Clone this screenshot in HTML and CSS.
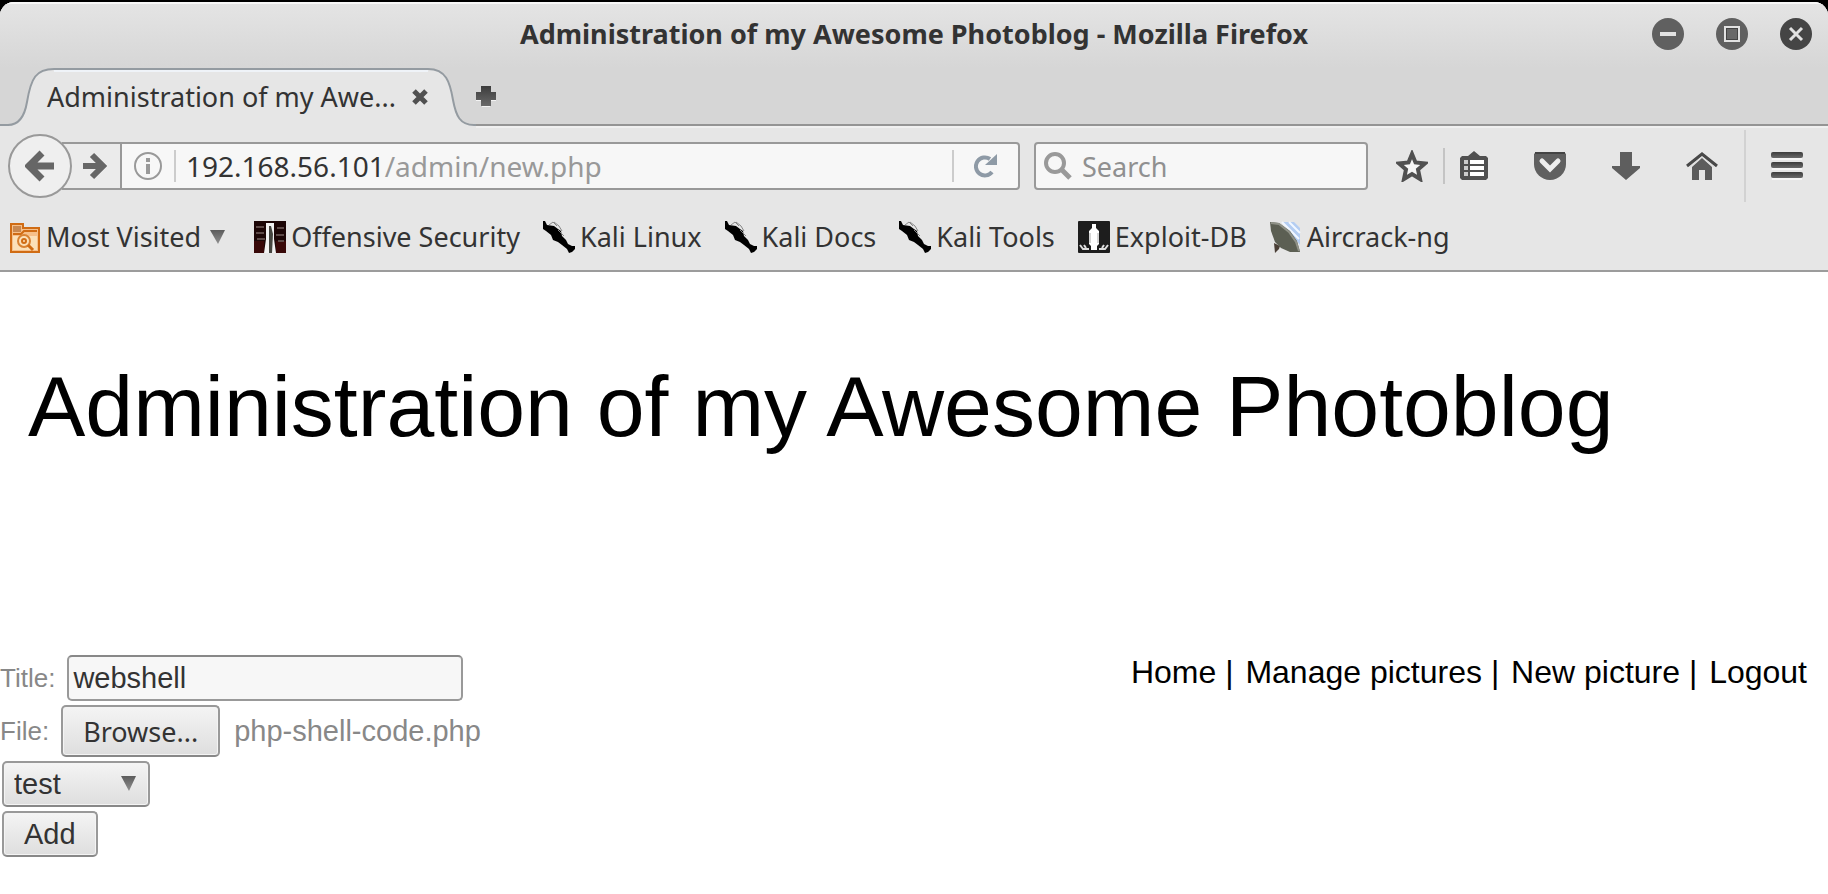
FILE: index.html
```html
<!DOCTYPE html>
<html lang="en">
<head>
<meta charset="utf-8">
<title>Administration of my Awesome Photoblog</title>
<link rel="stylesheet" href="styles.css">
</head>
<body>
<svg class="defs" width="0" height="0" aria-hidden="true">
  <defs>
    <linearGradient id="ink" x1="0" y1="0" x2="0" y2="1">
      <stop offset="0" stop-color="#3c3c3c"/><stop offset="1" stop-color="#6a6a6a"/>
    </linearGradient>
    <linearGradient id="ink-soft" x1="0" y1="0" x2="0" y2="1">
      <stop offset="0" stop-color="#5c5c5c"/><stop offset="1" stop-color="#909090"/>
    </linearGradient>
    <symbol id="dragon" viewBox="0 0 32 32">
      <path d="M0 0l2 0 2 4 7 1 4 3 3 2 1 5 4 4 2 4 4 2 3 0 0 3-3 3-3 1-2-4-5-4-4-3-5-2-2-5-5-4-3-2z" fill="#000"/>
      <path d="M6 4l4-3 4 4M11 1l5 4 3 5M15 9l6 6" fill="none" stroke="#888" stroke-width="1"/>
    </symbol>
  </defs>
</svg>
<div class="window">
  <header class="chrome">
    <div class="titlebar">
      <div class="title">Administration of my Awesome Photoblog - Mozilla Firefox</div>
      <div class="controls">
        <button class="plain" aria-label="Minimize"><svg width="32" height="32"><circle cx="16" cy="16" r="16" fill="#606060"/><path d="M8 16h16" stroke="#e2e2e2" stroke-width="4"/></svg></button>
        <button class="plain" aria-label="Maximize"><svg width="32" height="32"><circle cx="16" cy="16" r="16" fill="#606060"/><rect x="9" y="9" width="14" height="14" fill="#444" stroke="#e2e2e2" stroke-width="2"/><rect x="11" y="11" width="10" height="10" fill="#686868"/></svg></button>
        <button class="plain" aria-label="Close"><svg width="32" height="32"><circle cx="16" cy="16" r="16" fill="#454545"/><path d="M10 10l12 12M22 10L10 22" stroke="#e2e2e2" stroke-width="3"/></svg></button>
      </div>
    </div>
    <div class="tabs">
      <div class="tab">
        <svg class="tab-shape" width="476" height="60" viewBox="0 0 476 60" aria-hidden="true">
          <path d="M0 57H8C20 57 25 46 27 34C31 10 36 1 54 1H428C446 1 450 14 453 32C456 48 460 57 474 57H476V60H0Z" fill="#e6e6e6"/>
          <path d="M0 57H8C20 57 25 46 27 34C31 10 36 1 54 1H428C446 1 450 14 453 32C456 48 460 57 474 57H476" fill="none" stroke="#949ba1" stroke-width="2"/>
          <path d="M54 3H428" stroke="#eff3f8" stroke-width="2"/>
        </svg>
        <span class="tab-label">Administration of my Awe...</span>
        <button class="plain tab-close" aria-label="Close tab"><svg width="16" height="16"><path d="M2 2l12 12M14 2L2 14" stroke="#505050" stroke-width="5"/></svg></button>
      </div>
      <button class="plain" aria-label="New tab"><svg width="22" height="22"><path d="M7 2h8v6h6v7h-6v6H7v-6H1V8h6z" fill="#f4f4f4"/><path d="M6 0h10v6h5v8h-5v6H6v-6H1V6h5z" fill="url(#ink)"/></svg></button>
    </div>
    <nav class="toolbar" aria-label="Navigation">
      <div class="location">
        <button class="back" aria-label="Back"><svg width="30" height="32"><path d="M17 3L4 16l13 13M5 16h24" fill="none" stroke="#666" stroke-width="7"/></svg></button>
        <button class="forward" aria-label="Forward"><svg width="26" height="28"><path d="M10 3l11 11-11 11M1 14h20" fill="none" stroke="#666" stroke-width="6"/></svg></button>
        <div class="urlbar">
          <svg width="28" height="28"><circle cx="14" cy="14" r="13" fill="none" stroke="#999" stroke-width="2"/><path d="M14 6v4M14 12v10" stroke="#999" stroke-width="4"/></svg>
          <span class="rule"></span>
          <a class="url" href="#"><span class="host">192.168.56.101</span>/admin/new.php</a>
          <span class="rule"></span>
          <button class="plain reload" aria-label="Reload"><svg width="24" height="24"><path d="M18 18A9 9 0 1 1 16 5" fill="none" stroke="#8e9aa6" stroke-width="4"/><path d="M23 0v11H11z" fill="#8e9aa6"/></svg></button>
        </div>
      </div>
      <label class="search">
        <svg width="28" height="28"><circle cx="11" cy="11" r="9" fill="none" stroke="#999" stroke-width="4"/><path d="M17 17l9 9" stroke="#999" stroke-width="5"/></svg>
        <input type="text" placeholder="Search" aria-label="Search">
      </label>
      <div class="tools">
        <button class="plain" aria-label="Bookmark"><svg width="32" height="32"><path d="M16 4l3.500 8.500 9.500 1-7 6 2 9.500-8-5-8 5 2-9.500-7-6 9.500-1z" fill="#f5f5f5" stroke="#505050" stroke-width="4"/></svg></button>
        <span class="tool-rule"></span>
        <button class="plain" aria-label="Bookmarks list"><svg width="28" height="30"><path d="M8 5l6-5 6 5h6l2 2v20l-2 2H2l-2-2V7l2-2z" fill="#505050"/><path d="M4 9h4v4H4zM4 15h4v4H4zM4 21h4v4H4z" fill="#ccc"/><path d="M10 9h14v4H10zM10 15h14v4H10zM10 21h14v4H10z" fill="#fff"/></svg></button>
        <button class="plain" aria-label="Pocket"><svg width="32" height="28"><path d="M2 0h28l2 2v10a16 16 0 0 1-32 0V2z" fill="#606060"/><path d="M1 1h30" stroke="#444" stroke-width="2"/><path d="M8 9l8 8 8-8" fill="none" stroke="#eee" stroke-width="5" stroke-linecap="round"/></svg></button>
        <button class="plain" aria-label="Downloads"><svg width="28" height="28"><path d="M8 0h12v14h8v2L14 28 0 16v-2h8z" fill="#5e5e5e"/></svg></button>
        <button class="plain" aria-label="Home"><svg width="32" height="28"><path d="M16 6L6 15v13h7V18h6v10h7V15z" fill="#5c5c5c"/><path d="M1 14L16 2l15 12" fill="none" stroke="#484848" stroke-width="3"/><path d="M4 15L16 5l12 10" fill="none" stroke="#ddd" stroke-width="1"/></svg></button>
      </div>
      <button class="menu" aria-label="Menu"><svg width="32" height="28"><path d="M1 7h30M1 17h30M1 27h30" stroke="#f5f5f5" stroke-width="2"/><g fill="url(#ink)"><rect width="32" height="6" rx="2"/><rect y="10" width="32" height="6" rx="2"/><rect y="20" width="32" height="6" rx="2"/></g></svg></button>
    </nav>
    <nav class="bookmarks" aria-label="Bookmarks">
      <a href="#"><svg width="32" height="32"><path d="M2 31V3h12v4h16v24z" fill="#f6c08a" stroke="#d06c14" stroke-width="2"/><path d="M4 5h8v6H4z" fill="#c98850"/><path d="M4 13h8l3-3h13" fill="none" stroke="#d06c14" stroke-width="2"/><path d="M4 29V15h24v14z" fill="#fbe0b8"/><circle cx="15" cy="20" r="6" fill="none" stroke="#d98231" stroke-width="2"/><circle cx="15" cy="20" r="2" fill="none" stroke="#d06c14" stroke-width="2"/><path d="M19 24l5 5" stroke="#d06c14" stroke-width="3"/></svg><span>Most Visited</span><svg class="caret" width="15" height="14"><path d="M0 0h15L8 14z" fill="url(#ink-soft)"/></svg></a>
      <a href="#"><svg width="32" height="32"><path d="M0 0h32v32H0z" fill="#1c0606"/><path d="M0 20h10v12H0zM22 20h10v12H22z" fill="#380808"/><path d="M2 6h8M2 12h8M3 18h8M23 7h7M22 14h8M24 20h6" stroke="#5d4a48" stroke-width="2"/><path d="M12 2h8v16l2 14H10l2-14z" fill="#f2f2f2"/><path d="M15 5h2l2 8-1 19h-3V14z" fill="#45453f"/></svg><span>Offensive Security</span></a>
      <a href="#"><svg width="32" height="32"><use href="#dragon"/></svg><span>Kali Linux</span></a>
      <a href="#"><svg width="32" height="32"><use href="#dragon"/></svg><span>Kali Docs</span></a>
      <a href="#"><svg width="32" height="32"><use href="#dragon"/></svg><span>Kali Tools</span></a>
      <a href="#"><svg width="32" height="32"><rect width="32" height="32" rx="1" fill="#1d1d1d"/><path d="M14 3h4v4l3 3v13l-2 2v4h-6v-4l-2-2V10l3-3z" fill="#fff"/><path d="M12 12v10M20 12v10" stroke="#aaa" stroke-width="1"/><path d="M2 24l3 4h6M30 24l-3 4h-6M6 24l2 3M26 24l-2 3" fill="none" stroke="#ddd" stroke-width="2"/></svg><span>Exploit-DB</span></a>
      <a href="#"><svg width="32" height="32"><path d="M12 1h12l6 6v17z" fill="#b4cdf2"/><path d="M12 1l17 17M19 1l11 11" stroke="#f2f7ff" stroke-width="2"/><path d="M4 22l6 3-1 3-4 4z" fill="#4a3f36"/><path d="M0 1l9 1 11 8 7 10 3 11-10 0-9-4-6-6-4-11z" fill="#5c5f53"/><path d="M1 2l8 1 10 8 7 10 3 9" fill="none" stroke="#8f9187" stroke-width="2"/></svg><span>Aircrack-ng</span></a>
    </nav>
  </header>
  <main class="page">
    <h1>Administration of my Awesome Photoblog</h1>
    <div class="content">
      <form class="form">
        <div class="row"><label for="title">Title:</label><input id="title" class="field" type="text" value="webshell"></div>
        <div class="row"><label for="browse">File:</label><button id="browse" class="button browse" type="button">Browse...</button><span class="filename">php-shell-code.php</span></div>
        <div class="row select-row"><select class="button select" aria-label="Category"><option>test</option></select><svg class="select-caret" width="15" height="15"><path d="M0 0h15L8 15z" fill="url(#ink-soft)"/></svg></div>
        <div class="row"><button class="button add" type="button">Add</button></div>
      </form>
      <nav class="links" aria-label="Site"><a href="#">Home</a> | <a href="#">Manage pictures</a> | <a href="#">New picture</a> | <a href="#">Logout</a></nav>
    </div>
  </main>
</div>
</body>
</html>
```
FILE: styles.css
```css
* { box-sizing: border-box; }
body { margin: 0; background: #000; font-family: "Liberation Sans", Arial, sans-serif; }
svg { display: block; flex: none; }
.defs { position: absolute; }
a { color: inherit; text-decoration: none; }
button, input, select { font: inherit; color: inherit; margin: 0; }
.plain { border: 0; padding: 0; background: none; }

.window { margin-top: 2px; min-height: calc(100vh - 2px); display: flex; flex-direction: column; background: #fff; border-radius: 14px 14px 0 0; overflow: hidden; }
.chrome { background: #e6e6e6; color: #333; font: 27px/36px "Noto Sans", "Open Sans", sans-serif; border-bottom: 2px solid #9c9c9c; }

.titlebar { display: grid; grid-template-columns: 1fr auto 1fr; align-items: center; height: 66px; padding-bottom: 4px; border-top: 2px solid #f8f8f8; background: linear-gradient(#e4e4e4, #d6d6d6); }
.title { grid-column: 2; font-weight: 700; }
.controls { display: flex; justify-content: flex-end; gap: 32px; padding-right: 16px; }

.tabs { display: flex; align-items: center; height: 58px; background: #d6d6d6; box-shadow: inset 0 -2px #949494; }
.tab { position: relative; display: flex; align-items: center; width: 475px; height: 58px; padding-left: 47px; }
.tab-shape { position: absolute; left: 0; top: 0; }
.tab-label { position: relative; width: 365px; white-space: nowrap; }
.tab-close { position: relative; }

.toolbar { display: flex; align-items: center; height: 78px; padding-left: 8px; border-top: 2px solid #f0f0f0; }
.location { flex: 1; display: flex; align-items: center; height: 64px; font-size: 28px; }
.back { display: grid; place-items: center; flex: none; width: 64px; height: 64px; padding: 0; border: 2px solid #999; border-radius: 50%; background: #efefef; z-index: 1; }
.forward { display: grid; place-items: center; flex: none; width: 60px; height: 48px; margin-left: -10px; padding: 0 0 0 8px; border: 2px solid #999; border-left: 0; background: #ebebeb; }
.urlbar { flex: 1; display: flex; align-items: center; height: 48px; margin-left: -2px; padding-left: 12px; border: 2px solid #999; border-radius: 0 4px 4px 0; background: #f7f7f7; }
.rule { width: 2px; height: 32px; margin: 0 10px 0 12px; background: #ccc; }
.url { flex: 1; color: #999; }
.host { color: #333; }
.reload { padding: 0 20px 0 10px; }
.search { display: flex; align-items: center; gap: 10px; width: 334px; height: 48px; margin-left: 14px; padding: 0 8px; border: 2px solid #999; border-radius: 4px; background: #f7f7f7; }
.search input { flex: 1; min-width: 0; height: 40px; padding: 0; border: 0; background: none; outline: 0; }
.search input::placeholder { color: #909090; opacity: 1; }
.tools { display: flex; align-items: center; gap: 46px; padding: 0 26px 0 28px; }
.tool-rule { width: 2px; height: 36px; margin: 0 -31px; background: #c4c4c4; }
.menu { display: grid; place-items: center; width: 84px; height: 72px; padding: 0; border: 0; border-left: 2px solid #d2d2d2; background: none; }

.bookmarks { display: flex; align-items: center; gap: 23px; height: 66px; padding-left: 9px; }
.bookmarks a { display: flex; align-items: center; gap: 5px; white-space: nowrap; }
.caret { margin: 0 6px 0 4px; }

.page { flex: 1; color: #000; }
h1 { margin: 78px 28px 193px; font-size: 86px; font-weight: 400; line-height: 112px; }
.content { display: flex; justify-content: space-between; align-items: flex-start; }
.form { display: grid; gap: 4px; padding-left: 2px; color: #888; font-size: 29px; line-height: 36px; }
.row { display: flex; align-items: center; }
.row label { margin: 0 12px 0 -2px; font-size: 26px; }
.field { width: 396px; height: 46px; padding: 0 4px; border: 2px solid #999; border-top-color: #888; border-radius: 5px; background: #f7f7f7; color: #333; }
.button { height: 46px; padding: 0 20px; border: 2px solid #999; border-bottom-color: #888; border-radius: 5px; background: linear-gradient(#f4f4f4, #dedede); color: #333; box-shadow: inset 0 0 0 1px #f4f4f4; }
.browse { height: 52px; font: 27px "Noto Sans", "Open Sans", sans-serif; }
.filename { margin-left: 14px; }
.select-row { position: relative; width: 148px; }
.select { width: 100%; padding: 0 10px; appearance: none; }
.select-caret { position: absolute; right: 14px; top: 15px; pointer-events: none; }
.links { padding-right: 21px; font-size: 32px; line-height: 34px; }
.links a + a { margin-left: 3px; }
```
